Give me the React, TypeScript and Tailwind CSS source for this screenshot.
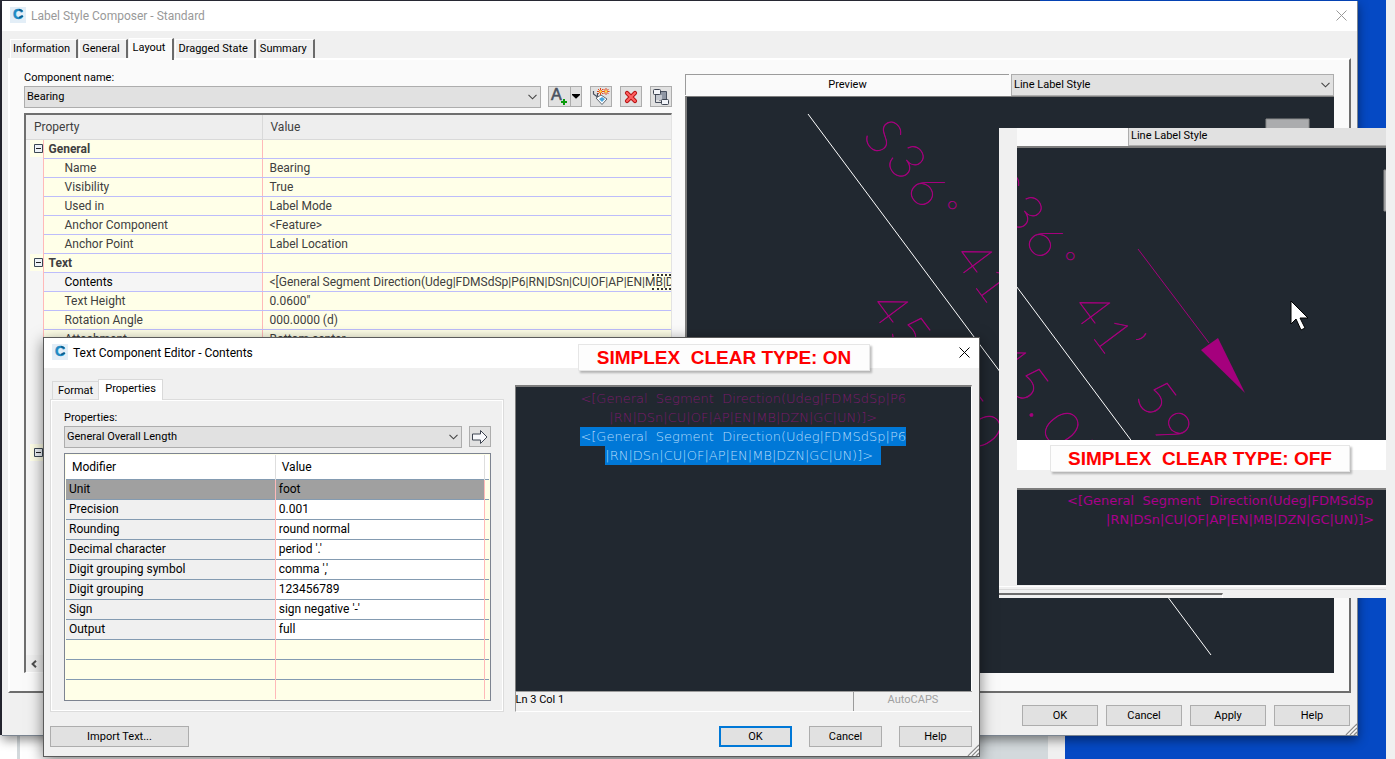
import { useState, type ReactNode } from "react";
import clsx from "clsx";

const MAIN_TABS = ["Information", "General", "Layout", "Dragged State", "Summary"];

interface PropertyRow {
    kind: "group" | "item";
    name?: string;
    value?: string;
    selected?: boolean;
}

const PROPERTY_ROWS: PropertyRow[] = [
    { kind: "group", name: "General" },
    { kind: "item", name: "Name", value: "Bearing" },
    { kind: "item", name: "Visibility", value: "True" },
    { kind: "item", name: "Used in", value: "Label Mode" },
    { kind: "item", name: "Anchor Component", value: "<Feature>" },
    { kind: "item", name: "Anchor Point", value: "Label Location" },
    { kind: "group", name: "Text" },
    {
        kind: "item",
        name: "Contents",
        value: "<[General Segment Direction(Udeg|FDMSdSp|P6|RN|DSn|CU|OF|AP|EN|MB|D",
        selected: true,
    },
    { kind: "item", name: "Text Height", value: '0.0600"' },
    { kind: "item", name: "Rotation Angle", value: "000.0000 (d)" },
    { kind: "item", name: "Attachment", value: "Bottom center" },
    { kind: "item" },
    { kind: "item" },
    { kind: "item" },
    { kind: "item" },
    { kind: "item" },
    { kind: "group" },
];

const MODIFIERS = [
    ["Unit", "foot"],
    ["Precision", "0.001"],
    ["Rounding", "round normal"],
    ["Decimal character", "period '.'"],
    ["Digit grouping symbol", "comma ','"],
    ["Digit grouping", "123456789"],
    ["Sign", "sign negative '-'"],
    ["Output", "full"],
    ["", ""],
    ["", ""],
    ["", ""],
];

function AppIcon() {
    return (
        <svg width="16" height="16" viewBox="0 0 16 16" className="mt-[6px] shrink-0 self-start" aria-hidden="true">
            <rect width="16" height="16" fill="#e3eef7" />
            <text x="3" y="12" fontSize="14" fontWeight="700" fill="#1d8ac4" stroke="#1d8ac4" strokeWidth=".5" fontFamily="Liberation Sans, sans-serif">
                C
            </text>
            <path d="M9 2.500 12.500 4M9 10.500l4-1.500" stroke="#0d5c8d" strokeWidth="1.500" />
        </svg>
    );
}

function CloseIcon() {
    return (
        <svg width="11" height="11" viewBox="0 0 11 11" aria-hidden="true">
            <path d="M.5.5l10 10M10.5.5l-10 10" stroke="currentColor" strokeWidth="1" />
        </svg>
    );
}

function Combo({ id, label, value, className }: { id: string; label?: string; value: string; className?: string }) {
    return (
        <div className={clsx("relative h-[22px]", className)}>
            <select
                id={id}
                aria-label={label}
                className="block h-full w-full appearance-none border border-[#adadad] bg-[#e1e1e1] pl-[2px] pr-6 text-[11px] leading-4 text-black"
            >
                <option>{value}</option>
            </select>
            <svg width="9" height="6" viewBox="0 0 9 6" className="pointer-events-none absolute right-1 top-2" aria-hidden="true">
                <path d="M.5.8l4 4 4-4" fill="none" stroke="#444" strokeWidth="1.1" />
            </svg>
        </div>
    );
}

function PushButton({ children, primary, className }: { children: ReactNode; primary?: boolean; className?: string }) {
    return (
        <button
            type="button"
            className={clsx(
                "h-[21px] bg-[#e1e1e1] text-center text-[11px] leading-4 text-black",
                primary ? "border-2 border-[#0078d7]" : "border border-[#adadad]",
                className
            )}
        >
            {children}
        </button>
    );
}

function ToolButton({ label, children }: { label: string; children: ReactNode }) {
    return (
        <button
            type="button"
            aria-label={label}
            className="flex h-[21px] w-[22px] items-center justify-center border border-[#adadad] bg-[#e1e1e1]"
        >
            {children}
        </button>
    );
}

function Grip() {
    return (
        <svg width="12" height="12" viewBox="0 0 12 12" className="absolute bottom-0 right-0" aria-hidden="true">
            <path d="M1 12 12 1M5 12l7-7M9 12l3-3" stroke="#8c8c8c" strokeWidth="1.4" />
            <path d="M2.5 12 12 2.5M6.5 12 12 6.5" stroke="#fff" strokeWidth="1" />
        </svg>
    );
}

// Model space of the label preview, in drawing units of one pixel.
function LabelDrawing({ x, y }: { x: number; y: number }) {
    return (
        <svg className="absolute inset-0 h-full w-full overflow-hidden" aria-hidden="true">
            <g transform={`translate(${-x} ${-y})`}>
                <path d="M808 114 1211 655" stroke="#fff" strokeWidth="1" />
                <g fill="#a5007d" stroke="#a5007d" strokeWidth=".6" fontFamily="Lato, Inter, sans-serif" fontWeight="100" fontSize="50">
                    <text transform="translate(862 136) rotate(53.3)">S</text>
                    <text transform="translate(884 160) rotate(53.3)">3</text>
                    <text transform="translate(905 188) rotate(53.3)">6</text>
                    <text transform="translate(936 210) rotate(53.3)" fontSize="28">°</text>
                    <text transform="translate(952 257) rotate(53.3)">4</text>
                    <text transform="translate(972 283) rotate(53.3)">1</text>
                    <text transform="translate(995 301) rotate(53.3)">’</text>
                    <text transform="translate(1016 346) rotate(53.3)">5</text>
                    <text transform="translate(1032 376) rotate(53.3)">9</text>
                    <text transform="translate(868 307) rotate(53.3)">4</text>
                    <text transform="translate(888 332) rotate(53.3)">5</text>
                    <text transform="translate(909 360) rotate(53.3)">.</text>
                    <text transform="translate(921 376) rotate(53.3)">0</text>
                    <text transform="translate(941 403) rotate(53.3)">5</text>
                    <text transform="translate(961 430) rotate(53.3)">0</text>
                </g>
                <path d="M1020 198 1091 292" stroke="#a5007d" strokeWidth="1" />
                <path d="M1100 287 1083 299 1127 342z" fill="#a5007d" />
                <path d="M1266 119h43v41h-43z" fill="#abacae" stroke="#8a8a8a" />
            </g>
        </svg>
    );
}

function Callout({ children, className }: { children: ReactNode; className?: string }) {
    return (
        <div
            className={clsx(
                "absolute flex h-[27px] items-center justify-center whitespace-pre border border-[#e6e6e6] bg-[#fdfdfd] font-['Liberation_Sans',Arial,sans-serif] text-[19px] font-bold leading-6 text-[#ff0000] shadow-[2px_2px_2px_rgba(0,0,0,0.25)]",
                className
            )}
        >
            {children}
        </div>
    );
}

function PropertyGrid() {
    return (
        <div className="flex min-h-0 flex-1 flex-col overflow-hidden border-b border-l-2 border-r border-t-2 border-b-white border-l-[#6f6f6f] border-r-[#e3e3e3] border-t-[#6f6f6f] bg-[#f5f5f5]">
            <div className="min-h-0 flex-1 overflow-hidden">
                <table className="w-full table-fixed border-collapse text-[12px] leading-4 text-[#404040]">
                    <colgroup>
                        <col className="w-[17px]" />
                        <col className="w-[219px]" />
                        <col />
                    </colgroup>
                    <thead>
                        <tr className="h-6 bg-[#eeeeee]">
                            <th colSpan={2} className="border-b border-r border-[#d9d9d9] p-0 pl-2 text-left font-normal">
                                Property
                            </th>
                            <th className="border-b border-[#d9d9d9] p-0 pl-2 text-left font-normal">Value</th>
                        </tr>
                    </thead>
                    <tbody>
                        {PROPERTY_ROWS.map((row, i) => (
                            <tr key={i} className="h-[19px]">
                                <td className="border-r border-[#ffb9b9] p-0">
                                    {row.kind === "group" && (
                                        <div className="ml-1 flex h-[17px] items-center justify-end bg-[#ffffe8]">
                                            <svg width="9" height="9" viewBox="0 0 9 9" aria-hidden="true">
                                                <path d="M.5.5h8v8h-8z" fill="#eef3f8" stroke="#3b4754" />
                                                <path d="M2 4.5h5" stroke="#222" />
                                            </svg>
                                        </div>
                                    )}
                                </td>
                                <td
                                    className={clsx(
                                        "border-b border-r border-b-[#bdbdfb] border-r-[#ffb9b9] p-0",
                                        row.selected ? "bg-[#f5f5f5]" : "bg-[#ffffe8]",
                                        row.kind === "group" ? "pl-[5px] font-bold" : "pl-[21px]",
                                        row.selected && "text-black"
                                    )}
                                >
                                    {row.name}
                                </td>
                                <td className="overflow-hidden whitespace-nowrap border-b border-b-[#bdbdfb] bg-[#ffffe8] p-0 pl-[7px]">
                                    <div className="relative">
                                        {row.value}
                                        {row.selected && (
                                            <span className="absolute inset-y-0 right-0 w-[19px] border-y-2 border-dotted border-[#333]" />
                                        )}
                                    </div>
                                </td>
                            </tr>
                        ))}
                    </tbody>
                </table>
            </div>
            <div className="flex h-[17px] items-center bg-[#f0f0f0] pl-1">
                <svg width="8" height="8" viewBox="0 0 8 8" aria-hidden="true">
                    <path d="M6 .8 2.6 4 6 7.2" fill="none" stroke="#505050" strokeWidth="2" />
                </svg>
            </div>
        </div>
    );
}

function ComponentToolbar() {
    return (
        <div className="flex gap-2">
            <div className="flex">
                <button type="button" aria-label="Add text component" className="flex h-[21px] w-[23px] items-center justify-center border border-[#adadad] bg-[#e1e1e1]">
                    <svg width="19" height="19" viewBox="0 0 19 19" aria-hidden="true">
                        <text x="1" y="13" fontSize="16" fontFamily="Liberation Sans, sans-serif" fill="#4a5160" stroke="#4a5160" strokeWidth=".6">
                            A
                        </text>
                        <path d="M14 12v6M11 15h6" stroke="#0a9a0a" strokeWidth="2" />
                    </svg>
                </button>
                <button type="button" aria-label="Component types" className="flex h-[21px] w-[11px] items-center justify-center border border-l-0 border-[#adadad] bg-[#e1e1e1]">
                    <svg width="8" height="5" viewBox="0 0 8 5" aria-hidden="true">
                        <path d="M0 0h8v1L4 4.8 0 1z" fill="#000" />
                    </svg>
                </button>
            </div>
            <ToolButton label="Copy component">
                <svg width="18" height="18" viewBox="0 0 18 18" aria-hidden="true">
                    <path d="M1.500 3v3l4 3M5.500 5v4" fill="none" stroke="#4a5160" strokeWidth="1.2" />
                    <path d="m4 10 5-3 6 4-5 5.500z" fill="#fff" stroke="#5f6670" />
                    <path d="m7 11 3-2 3 2-3 3z" fill="#49a5dc" />
                    <path d="M8.500 0v7M5 3.500h7M6 1l5 5M11 1 6 6M14 0v7M10.500 3.500h7M11.500 1l5 5M16.500 1l-5 5" stroke="#e4471c" strokeWidth="1" />
                    <circle cx="8.500" cy="3.500" r="1.300" fill="#ffe04a" />
                    <circle cx="14" cy="3.500" r="1.300" fill="#ffe04a" />
                </svg>
            </ToolButton>
            <ToolButton label="Delete component">
                <svg width="14" height="14" viewBox="0 0 14 14" aria-hidden="true">
                    <path d="m3 3 8 8M11 3l-8 8" stroke="#b51212" strokeWidth="4.200" strokeLinecap="round" />
                    <path d="m3 3 8 8M11 3l-8 8" stroke="#ff6161" strokeWidth="2.200" strokeLinecap="round" />
                </svg>
            </ToolButton>
            <ToolButton label="Component draw order">
                <svg width="18" height="18" viewBox="0 0 18 18" aria-hidden="true">
                    <path d="M7 3.500h7.500V12H7z" fill="#8f96a3" stroke="#4a5160" />
                    <path d="M3.500 6v8.500H10" fill="none" stroke="#4a5160" />
                    <path d="M4 7h6v5H4z" fill="#c3c7cf" />
                    <rect x="1.500" y="1.500" width="7" height="5" rx="1" fill="#f3f5fa" stroke="#3d4451" />
                    <rect x="9.500" y="11.500" width="7" height="5" rx="1" fill="#f3f5fa" stroke="#3d4451" />
                </svg>
            </ToolButton>
        </div>
    );
}

function StyleComposer() {
    const [tab, setTab] = useState("Layout");

    return (
        <section className="absolute bottom-[23px] left-0.5 right-[37px] top-px flex flex-col border-b border-r border-[#7a8490] bg-[#f0f0f0] shadow-[0_4px_10px_rgba(0,0,0,0.45)]">
            <header className="flex h-[30px] items-center bg-white pl-2 pr-[10px] text-[#999999]">
                <AppIcon />
                <h1 className="flex-1 pl-[5px] text-[12px] leading-4">Label Style Composer - Standard</h1>
                <button type="button" aria-label="Close" className="mb-[2px]">
                    <CloseIcon />
                </button>
            </header>

            <nav className="flex h-[27px] items-end gap-px pl-2" role="tablist">
                {MAIN_TABS.map((name) => (
                    <button
                        key={name}
                        type="button"
                        role="tab"
                        aria-selected={tab === name}
                        onClick={() => setTab(name)}
                        className={clsx(
                            "relative border-l border-t border-r-2 border-l-white border-t-white border-r-[#6b6b6b] text-[11px] leading-4 text-black",
                            tab === name
                                ? "z-10 -mb-[2px] h-[22px] bg-[#fafafa] pb-1 pl-[3px] pr-[7px]"
                                : "h-[19px] bg-[#f0f0f0] pb-px pl-[2px] pr-[6px]"
                        )}
                    >
                        {name}
                    </button>
                ))}
            </nav>

            <div className="mx-[6px] flex min-h-0 flex-1 gap-[13px] border-2 border-b-[#6d6d6d] border-l-white border-r-[#6d6d6d] border-t-white bg-[#fafafa] pb-[18px] pl-[14px] pr-[15px]">
                <div className="flex min-w-0 flex-[648] flex-col pt-[10px]">
                    <label htmlFor="component" className="text-[11px] leading-4 text-black">
                        Component name:
                    </label>
                    <div className="mb-[5px] flex items-start gap-[7px]">
                        <Combo id="component" value="Bearing" className="flex-1" />
                        <ComponentToolbar />
                    </div>
                    <PropertyGrid />
                </div>

                <div className="flex min-w-0 flex-[649] flex-col pt-[14px]">
                    <div className="flex h-[21px] gap-[2px]">
                        <div className="flex-1 border-l border-t border-[#9b9b9b] text-center text-[11px] leading-5 text-black">Preview</div>
                        <Combo id="preview-style" label="Preview style" value="Line Label Style" className="flex-1" />
                    </div>
                    <div className="relative mt-px min-h-0 flex-1 overflow-hidden border-l-2 border-t border-[#7d7d7d] bg-[#212830]">
                        <LabelDrawing x={687} y={97} />
                    </div>
                </div>
            </div>

            <footer className="flex justify-end gap-2 pb-[9px] pr-[7px] pt-[12px]">
                <PushButton className="w-[76px]">OK</PushButton>
                <PushButton className="w-[76px]">Cancel</PushButton>
                <PushButton className="w-[76px]">Apply</PushButton>
                <PushButton className="w-[76px]">Help</PushButton>
            </footer>
            <Grip />
        </section>
    );
}

const FIRST_LINE = "<[General  Segment  Direction(Udeg|FDMSdSp|P6";
const SECOND_LINE = "|RN|DSn|CU|OF|AP|EN|MB|DZN|GC|UN)]>";

function TextEditor() {
    return (
        <section className="absolute left-[43px] right-[415px] top-[337px] border border-[#5a5a5a] bg-[#f0f0f0] shadow-[0_4px_14px_rgba(0,0,0,0.5)]">
            <header className="flex h-[30px] items-center bg-white pl-2 pr-[9px] text-black">
                <AppIcon />
                <h2 className="flex-1 pl-[5px] text-[12px] leading-4">Text Component Editor - Contents</h2>
                <button type="button" aria-label="Close" className="mb-[2px]">
                    <CloseIcon />
                </button>
            </header>

            <div className="flex gap-[11px] pl-[6px] pr-[7px]">
                <div className="flex min-w-0 flex-[453] flex-col pt-[11px]">
                    <nav className="flex h-5 items-end pl-[2px]" role="tablist">
                        <button type="button" role="tab" className="h-[18px] border border-b-0 border-r-0 border-[#d9d9d9] px-[5px] text-[11px] leading-4">
                            Format
                        </button>
                        <button type="button" role="tab" aria-selected="true" className="relative z-10 -mb-px h-[21px] border border-b-0 border-[#d9d9d9] bg-white px-[6px] pb-[2px] text-[11px] leading-4">
                            Properties
                        </button>
                    </nav>
                    <div className="flex flex-1 flex-col border border-[#dcdcdc] pb-[10px] pl-[13px] pr-3 pt-[10px] shadow-[inset_1px_1px_0_#fff,inset_-1px_-1px_0_#fff]">
                        <label htmlFor="property" className="text-[11px] leading-4 text-black">
                            Properties:
                        </label>
                        <div className="mb-[5px] flex items-start gap-[7px]">
                            <Combo id="property" value="General Overall Length" className="flex-1" />
                            <ToolButton label="Insert property">
                                <svg width="18" height="16" viewBox="0 0 18 16" aria-hidden="true">
                                    <path d="M1.500 5h8V1.500L16 8l-6.500 6.500V11h-8z" fill="#f8f9fc" stroke="#3d4451" />
                                </svg>
                            </ToolButton>
                        </div>
                        <div className="border border-[#7d8491] bg-[#ffffe8] p-px">
                            <table className="w-full table-fixed border-collapse text-[12px] leading-4 text-black">
                                <colgroup>
                                    <col className="w-1/2" />
                                    <col className="w-1/2" />
                                    <col className="w-[4px]" />
                                </colgroup>
                                <thead>
                                    <tr className="h-[24px] bg-white">
                                        <th className="border-r border-[#dedede] p-0 pl-[6px] text-left font-normal">Modifier</th>
                                        <th className="border-r border-[#dedede] p-0 pl-[6px] text-left font-normal">Value</th>
                                        <th className="p-0" />
                                    </tr>
                                </thead>
                                <tbody>
                                    {MODIFIERS.map(([name, value], i) => (
                                        <tr key={i} className="h-5 border-t border-[#849bb1]">
                                            <td
                                                className={clsx(
                                                    "border-r border-r-[#ffb9b9] p-0 pl-[3px]",
                                                    i === 0 && "bg-[#a0a0a0]",
                                                    i > 0 && name && "bg-[#f0f0f0]"
                                                )}
                                            >
                                                {name}
                                            </td>
                                            <td
                                                className={clsx(
                                                    "border-r border-r-[#ffb9b9] p-0 pl-[3px]",
                                                    i === 0 && "bg-[#a0a0a0]",
                                                    i > 0 && name && "bg-white"
                                                )}
                                            >
                                                {value}
                                            </td>
                                            <td className="p-0" />
                                        </tr>
                                    ))}
                                </tbody>
                            </table>
                        </div>
                    </div>
                </div>

                <div className="flex min-w-0 flex-[457] flex-col pt-[17px]">
                    <div className="flex-1 whitespace-pre border-l border-r border-t-2 border-l-[#7d7d7d] border-r-white border-t-[#7d7d7d] bg-[#212830] pt-[2px] text-center font-['DejaVu_Sans_Light','DejaVu_Sans',sans-serif] text-[13px] font-extralight leading-[19px]">
                        <p className="text-[#7a1a6c]">{FIRST_LINE}</p>
                        <p className="text-[#7a1a6c]">{SECOND_LINE}</p>
                        <p className="text-[#b5dcfb]">
                            <span className="inline-block bg-[#0078d7]">{FIRST_LINE}</span>
                        </p>
                        <p className="text-[#b5dcfb]">
                            <span className="inline-block bg-[#0078d7] pr-2">{SECOND_LINE}</span>
                        </p>
                    </div>
                    <div className="flex h-[21px] border-b border-l border-t border-[#9b9b9b] border-b-white text-[11px] leading-4">
                        <span className="flex-1 text-black">Ln 3 Col 1</span>
                        <span className="w-[119px] border-l border-[#9b9b9b] text-center text-[#a0a0a0]">AutoCAPS</span>
                    </div>
                </div>
            </div>

            <footer className="flex gap-[17px] pb-[9px] pl-[6px] pr-[7px] pt-[14px]">
                <PushButton className="w-[139px]">Import Text...</PushButton>
                <span className="flex-1" />
                <PushButton primary className="w-[73px]">OK</PushButton>
                <PushButton className="w-[73px]">Cancel</PushButton>
                <PushButton className="w-[73px]">Help</PushButton>
            </footer>
            <Grip />
            <Callout className="right-[109px] top-[6px] w-[292px]">SIMPLEX  CLEAR TYPE: ON</Callout>
        </section>
    );
}

function ClearTypeOffPanel() {
    return (
        <section className="absolute right-[9px] top-[128px] w-[387px] bg-[#f0f0f0]">
            <div className="ml-[18px]">
                <div className="flex h-[18px] text-[11px] leading-4 text-black">
                    <span className="w-[111px] bg-[#fafafa]" />
                    <span className="flex-1 border-b border-l border-[#adadad] bg-[#e1e1e1] pl-[2px]">Line Label Style</span>
                </div>
                <div className="relative h-[294px] overflow-hidden border-t-2 border-[#7d7d7d] bg-[#212830]">
                    <LabelDrawing x={899} y={97} />
                    <svg width="20" height="32" viewBox="0 0 20 32" className="absolute right-[76px] top-[152px]" aria-hidden="true">
                        <path d="M1 1v23l5-5 5 11 4-2-5-10h8z" fill="#fff" stroke="#000" />
                    </svg>
                </div>
                <div className="h-[30px] bg-white" />
                <div className="mt-[18px] h-[97px] overflow-hidden whitespace-pre border-t-2 border-[#7d7d7d] bg-[#212830] pl-[50px] pt-[1px] font-['DejaVu_Sans',sans-serif] text-[13px] font-normal leading-[19px] text-[#a8008a]">
                    <p>{"<[General  Segment  Direction(Udeg|FDMSdSp"}</p>
                    <p className="pl-[39px]">{SECOND_LINE}</p>
                </div>
            </div>
            <div className="mt-px h-[4px] border-b border-t border-b-[#d9d9d9] border-t-white" />
            <div className="mt-[3px] h-[5px] w-[224px] border-r border-t-2 border-r-white border-t-[#6d6d6d]" />
            <Callout className="left-[51px] top-[317px] w-[300px]">SIMPLEX  CLEAR TYPE: OFF</Callout>
        </section>
    );
}

function DesktopBackground() {
    return (
        <div className="absolute inset-0 flex">
            <div className="flex flex-1 flex-col">
                <div className="flex flex-1">
                    <div className="w-9/12 bg-[#2b2c38]" />
                    <div className="flex-1 bg-[#0549c4]" />
                </div>
                <div className="flex h-6">
                    <div className="w-[17px] bg-white" />
                    <div className="w-[3px] bg-[#d3d9dc]" />
                    <div className="w-[250px] bg-white" />
                    <div className="flex-1 bg-[#d3d9dc]" />
                    <div className="w-[17px] bg-[#f0f0f0]" />
                    <div className="w-[321px] bg-[#0549c4]" />
                </div>
            </div>
            <div className="w-[9px] bg-[#f0f0f0]" />
        </div>
    );
}

export default function App() {
    return (
        <main className="relative h-screen w-full overflow-hidden font-[Roboto,'Noto_Sans',sans-serif]">
            <DesktopBackground />
            <StyleComposer />
            <TextEditor />
            <ClearTypeOffPanel />
        </main>
    );
}
